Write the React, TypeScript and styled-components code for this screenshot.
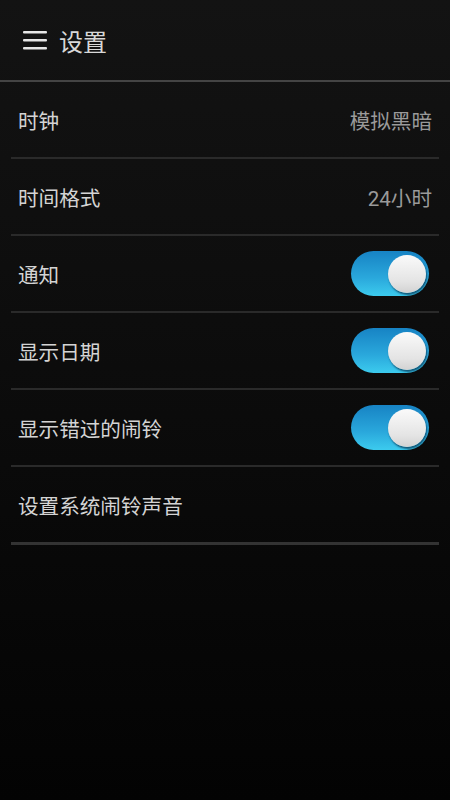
import { createGlobalStyle } from 'styled-components';
import styled from 'styled-components';

const GlobalStyle = createGlobalStyle`
  html, body {
    margin: 0;
    padding: 0;
    background: #050505;
  }
  body {
    font-family: Roboto, "Noto Sans CJK SC", "Noto Sans", sans-serif;
  }
`;

const Screen = styled.div`
  width: 450px;
  height: 800px;
  background: linear-gradient(to bottom, #131313 0%, #0d0d0d 40%, #030303 100%);
  display: flex;
  flex-direction: column;
  overflow: hidden;
`;

const Header = styled.header`
  height: 80px;
  display: flex;
  align-items: center;
  padding-left: 23px;
  gap: 11px;
  border-bottom: 2px solid #444;
`;

const Title = styled.h1`
  margin: 0;
  font-size: 24px;
  font-weight: 400;
  color: #d8d8d8;
  padding-top: 1px;
`;

const List = styled.div`
  margin: 0 11px;
  display: flex;
  flex-direction: column;
`;

const Row = styled.div<{ $last?: boolean }>`
  height: 75px;
  display: flex;
  align-items: center;
  justify-content: space-between;
  padding: 0 7px;
  border-bottom: ${(p) => (p.$last ? '3px solid #333' : '2px solid #2a2a2a')};
`;

const Label = styled.span`
  font-size: 20.6px;
  color: #d4d4d4;
`;

const Value = styled.span`
  font-size: 20.6px;
  color: #9a9a9a;
`;

const Track = styled.div`
  width: 78px;
  height: 45px;
  border-radius: 23px;
  background: linear-gradient(to bottom, #1783c4 0%, #2aa8dc 60%, #3ccbee 100%);
  display: flex;
  align-items: center;
  justify-content: flex-end;
  padding-right: 3px;
  box-sizing: border-box;
  margin-right: 3px;
`;

const Knob = styled.div`
  width: 38px;
  height: 38px;
  border-radius: 50%;
  background: linear-gradient(to bottom, #fafafa 0%, #e4e4e4 70%, #d2d2d2 100%);
  box-shadow: 1px 2px 2px rgba(0, 40, 70, 0.7);
`;

const Menu = () => (
  <svg width="25" height="20" viewBox="0 0 25 20">
    <rect x="0" y="1" width="24" height="2.6" rx="1" fill="#e6e6e6" />
    <rect x="0" y="9" width="24" height="2.6" rx="1" fill="#e6e6e6" />
    <rect x="0" y="17" width="24" height="2.6" rx="1" fill="#e6e6e6" />
  </svg>
);

const Toggle = () => (
  <Track>
    <Knob />
  </Track>
);

export default function App() {
  return (
    <>
      <GlobalStyle />
      <Screen>
        <Header>
          <Menu />
          <Title>设置</Title>
        </Header>
        <List>
          <Row>
            <Label>时钟</Label>
            <Value>模拟黑暗</Value>
          </Row>
          <Row>
            <Label>时间格式</Label>
            <Value>24小时</Value>
          </Row>
          <Row>
            <Label>通知</Label>
            <Toggle />
          </Row>
          <Row>
            <Label>显示日期</Label>
            <Toggle />
          </Row>
          <Row>
            <Label>显示错过的闹铃</Label>
            <Toggle />
          </Row>
          <Row $last>
            <Label>设置系统闹铃声音</Label>
          </Row>
        </List>
      </Screen>
    </>
  );
}
